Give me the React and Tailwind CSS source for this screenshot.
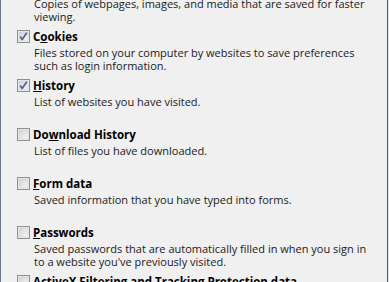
import React from "react";

function Box({ checked }) {
  return (
    <svg width="13" height="13" viewBox="0 0 13 13" className="block">
      <defs>
        <linearGradient id="bg" x1="0" y1="0" x2="1" y2="1">
          <stop offset="0" stopColor="#d2d2d2" />
          <stop offset="1" stopColor="#f8f8f8" />
        </linearGradient>
      </defs>
      <rect x="0.5" y="0.5" width="12" height="12" fill="#f4f4f4" stroke="#8e8f8f" />
      <rect x="2" y="2" width="9" height="9" fill="url(#bg)" stroke="#c8c8c8" strokeWidth="0.6" />
      {checked && (
        <path d="M3.2 6.6 L5.2 9.4 L9.8 2.8" fill="none" stroke="#4a5f9a" strokeWidth="1.7" strokeLinejoin="round" />
      )}
    </svg>
  );
}

function Item({ checked, title, lines }) {
  return (
    <div className="h-[49px] flex">
      <div className="w-[32px] pl-[16px] pt-[1px]">
        <Box checked={checked} />
      </div>
      <div className="flex flex-col">
        <div className="h-[15px] leading-[15px] font-bold text-black text-[11.5px]">{title}</div>
        <div className="mt-[2px] pl-[1px] text-[#1a1a1a] leading-[13px]">
          {lines.map((l, i) => (
            <div key={i} className="whitespace-nowrap">{l}</div>
          ))}
        </div>
      </div>
    </div>
  );
}

export default function App() {
  return (
    <div className="w-[389px] h-[282px] overflow-hidden bg-[#dbe4ee] flex">
      <div
        className="w-[388px] h-[282px] bg-[#f0f0f0] border-l border-l-[#6d7886] border-r border-r-[#4f5d6e] overflow-hidden text-[11px]"
        style={{ fontFamily: '"Open Sans", "Noto Sans", sans-serif' }}
      >
        <div className="-mt-[20px]">
          <Item checked={false} title="Temporary Internet files" lines={["Copies of webpages, images, and media that are saved for faster", "viewing."]} />
          <Item checked title={<>C<u>o</u>okies</>} lines={["Files stored on your computer by websites to save preferences", "such as login information."]} />
          <Item checked title={<><u>H</u>istory</>} lines={["List of websites you have visited."]} />
          <Item checked={false} title={<>Do<u>w</u>nload History</>} lines={["List of files you have downloaded."]} />
          <Item checked={false} title={<><u>F</u>orm data</>} lines={["Saved information that you have typed into forms."]} />
          <Item checked={false} title={<><u>P</u>asswords</>} lines={["Saved passwords that are automatically filled in when you sign in", "to a website you've previously visited."]} />
          <Item checked={false} title="ActiveX Filtering and Tracking Protection data" lines={["Websites that you have excluded from filtering."]} />
        </div>
      </div>
    </div>
  );
}
